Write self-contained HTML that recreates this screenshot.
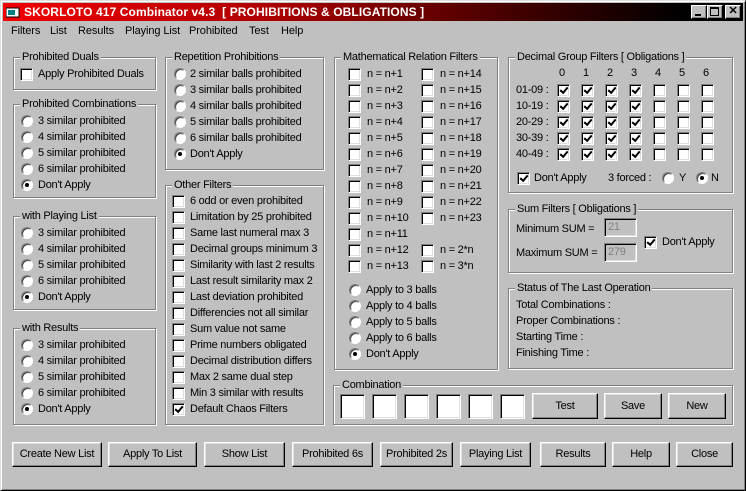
<!DOCTYPE html>
<html><head><meta charset="utf-8"><style>
*{box-sizing:border-box}
body{margin:0;width:746px;height:491px;overflow:hidden;background:#c0c0c0;font-family:"Liberation Sans",sans-serif;font-size:11px;letter-spacing:-0.25px;color:#000;position:relative}
.win{position:absolute;left:0;top:0;width:746px;height:491px;border:1px solid;border-color:#dfdfdf #000 #000 #dfdfdf;box-shadow:inset 1px 1px #fff,inset -1px -1px #808080}
.title{position:absolute;left:3px;top:3px;width:740px;height:18px;background:linear-gradient(to right,#f00000 0%,#b00000 35%,#400000 70%,#000 92%);color:#fff;font-weight:bold;font-size:12px;letter-spacing:0.1px;line-height:18px;padding-left:21px;white-space:pre}
.tb{position:absolute;top:2px;width:16px;height:14px;background:#c0c0c0;border:1px solid;border-color:#fff #000 #000 #fff;box-shadow:inset -1px -1px #808080}
.menu{position:absolute;top:24px;height:15px;line-height:15px;font-size:11px;letter-spacing:-0.1px}
.a{position:absolute;white-space:nowrap;line-height:14px;height:14px}
.g{position:absolute;border:1px solid #808080;box-shadow:inset 1px 1px #fff,1px 1px #fff}
.gl{position:absolute;top:-8px;left:6px;background:#c0c0c0;padding:0 2px;line-height:14px;white-space:nowrap}
.cb{position:absolute;width:13px;height:13px;background:#fff;border:1px solid;border-color:#808080 #fff #fff #808080;box-shadow:inset 1px 1px #000,inset -1px -1px #dfdfdf}
.ck::after{content:"";position:absolute;left:2px;top:1px;width:6px;height:3px;border-left:2px solid #000;border-bottom:2px solid #000;transform:rotate(-50deg);transform-origin:center;margin-top:1px}
.rb{position:absolute;width:12px;height:12px;border-radius:50%;background:#fff;border:1px solid;border-color:#808080 #fff #fff #808080;box-shadow:inset 1px 1px #404040}
.on::after{content:"";position:absolute;left:3px;top:3px;width:4px;height:4px;border-radius:50%;background:#000}
.btn{position:absolute;background:#c0c0c0;border:1px solid;border-color:#fff #000 #000 #fff;box-shadow:inset -1px -1px #808080,inset 1px 1px #dfdfdf;text-align:center;white-space:nowrap;font-size:11px}
.inp{position:absolute;background:#fff;border:1px solid;border-color:#808080 #fff #fff #808080;box-shadow:inset 1px 1px #000,inset -1px -1px #dfdfdf}
.gray{color:#808080;padding-left:3px;line-height:16px;background:#c0c0c0}
</style></head><body>
<div class="win"></div>
<div class="title">SKORLOTO 417 Combinator v4.3  [ PROHIBITIONS &amp; OBLIGATIONS ]</div>
<svg style="position:absolute;left:6px;top:6px" width="14" height="12"><rect x="0" y="2" width="13" height="9" fill="#fff" stroke="#000"/><rect x="2" y="4" width="7" height="5" fill="#008080"/></svg>
<div class="tb" style="left:691px;top:5px"><div style="position:absolute;left:3px;top:8px;width:6px;height:2px;background:#000"></div></div>
<div class="tb" style="left:707px;top:5px"><div style="position:absolute;left:2px;top:1px;width:9px;height:9px;border:1px solid #000;border-top-width:2px"></div></div>
<div class="tb" style="left:725px;top:5px;font-size:11px;line-height:11px;text-align:center;font-weight:bold">✕</div>
<div class="menu" style="left:11px">Filters</div>
<div class="menu" style="left:50px">List</div>
<div class="menu" style="left:78px">Results</div>
<div class="menu" style="left:125px">Playing List</div>
<div class="menu" style="left:189px">Prohibited</div>
<div class="menu" style="left:249px">Test</div>
<div class="menu" style="left:281px">Help</div>

<div class="g" style="left:13px;top:57px;width:143px;height:33px"><div class="gl">Prohibited Duals</div></div>
<div class="cb" style="left:20px;top:68px"></div><div class="a" style="left:38px;top:67px">Apply Prohibited Duals</div>

<div class="g" style="left:13px;top:104px;width:143px;height:94px"><div class="gl">Prohibited Combinations</div></div>
<div class="rb" style="left:21px;top:115px"></div><div class="a" style="left:38px;top:114px">3 similar prohibited</div>
<div class="rb" style="left:21px;top:131px"></div><div class="a" style="left:38px;top:130px">4 similar prohibited</div>
<div class="rb" style="left:21px;top:147px"></div><div class="a" style="left:38px;top:146px">5 similar prohibited</div>
<div class="rb" style="left:21px;top:163px"></div><div class="a" style="left:38px;top:162px">6 similar prohibited</div>
<div class="rb on" style="left:21px;top:179px"></div><div class="a" style="left:38px;top:178px">Don't Apply</div>

<div class="g" style="left:13px;top:216px;width:143px;height:94px"><div class="gl">with Playing List</div></div>
<div class="rb" style="left:21px;top:227px"></div><div class="a" style="left:38px;top:226px">3 similar prohibited</div>
<div class="rb" style="left:21px;top:243px"></div><div class="a" style="left:38px;top:242px">4 similar prohibited</div>
<div class="rb" style="left:21px;top:259px"></div><div class="a" style="left:38px;top:258px">5 similar prohibited</div>
<div class="rb" style="left:21px;top:275px"></div><div class="a" style="left:38px;top:274px">6 similar prohibited</div>
<div class="rb on" style="left:21px;top:291px"></div><div class="a" style="left:38px;top:290px">Don't Apply</div>

<div class="g" style="left:13px;top:328px;width:143px;height:97px"><div class="gl">with Results</div></div>
<div class="rb" style="left:21px;top:339px"></div><div class="a" style="left:38px;top:338px">3 similar prohibited</div>
<div class="rb" style="left:21px;top:355px"></div><div class="a" style="left:38px;top:354px">4 similar prohibited</div>
<div class="rb" style="left:21px;top:371px"></div><div class="a" style="left:38px;top:370px">5 similar prohibited</div>
<div class="rb" style="left:21px;top:387px"></div><div class="a" style="left:38px;top:386px">6 similar prohibited</div>
<div class="rb on" style="left:21px;top:403px"></div><div class="a" style="left:38px;top:402px">Don't Apply</div>

<div class="g" style="left:165px;top:57px;width:159px;height:113px"><div class="gl">Repetition Prohibitions</div></div>
<div class="rb" style="left:174px;top:68px"></div><div class="a" style="left:190px;top:67px">2 similar balls prohibited</div>
<div class="rb" style="left:174px;top:84px"></div><div class="a" style="left:190px;top:83px">3 similar balls prohibited</div>
<div class="rb" style="left:174px;top:100px"></div><div class="a" style="left:190px;top:99px">4 similar balls prohibited</div>
<div class="rb" style="left:174px;top:116px"></div><div class="a" style="left:190px;top:115px">5 similar balls prohibited</div>
<div class="rb" style="left:174px;top:132px"></div><div class="a" style="left:190px;top:131px">6 similar balls prohibited</div>
<div class="rb on" style="left:174px;top:148px"></div><div class="a" style="left:190px;top:147px">Don't Apply</div>

<div class="g" style="left:165px;top:185px;width:159px;height:240px"><div class="gl">Other Filters</div></div>
<div class="cb" style="left:172px;top:195px"></div><div class="a" style="left:190px;top:194px">6 odd or even prohibited</div>
<div class="cb" style="left:172px;top:211px"></div><div class="a" style="left:190px;top:210px">Limitation by 25 prohibited</div>
<div class="cb" style="left:172px;top:227px"></div><div class="a" style="left:190px;top:226px">Same last numeral max 3</div>
<div class="cb" style="left:172px;top:243px"></div><div class="a" style="left:190px;top:242px">Decimal groups minimum 3</div>
<div class="cb" style="left:172px;top:259px"></div><div class="a" style="left:190px;top:258px">Similarity with last 2 results</div>
<div class="cb" style="left:172px;top:275px"></div><div class="a" style="left:190px;top:274px">Last result similarity max 2</div>
<div class="cb" style="left:172px;top:291px"></div><div class="a" style="left:190px;top:290px">Last deviation prohibited</div>
<div class="cb" style="left:172px;top:307px"></div><div class="a" style="left:190px;top:306px">Differencies not all similar</div>
<div class="cb" style="left:172px;top:323px"></div><div class="a" style="left:190px;top:322px">Sum value not same</div>
<div class="cb" style="left:172px;top:339px"></div><div class="a" style="left:190px;top:338px">Prime numbers obligated</div>
<div class="cb" style="left:172px;top:355px"></div><div class="a" style="left:190px;top:354px">Decimal distribution differs</div>
<div class="cb" style="left:172px;top:371px"></div><div class="a" style="left:190px;top:370px">Max 2 same dual step</div>
<div class="cb" style="left:172px;top:387px"></div><div class="a" style="left:190px;top:386px">Min 3 similar with results</div>
<div class="cb ck" style="left:172px;top:403px"></div><div class="a" style="left:190px;top:402px">Default Chaos Filters</div>

<div class="g" style="left:334px;top:57px;width:164px;height:313px"><div class="gl">Mathematical Relation Filters</div></div>
<div class="cb" style="left:348px;top:68px"></div><div class="a" style="left:367px;top:67px">n = n+1</div>
<div class="cb" style="left:348px;top:84px"></div><div class="a" style="left:367px;top:83px">n = n+2</div>
<div class="cb" style="left:348px;top:100px"></div><div class="a" style="left:367px;top:99px">n = n+3</div>
<div class="cb" style="left:348px;top:116px"></div><div class="a" style="left:367px;top:115px">n = n+4</div>
<div class="cb" style="left:348px;top:132px"></div><div class="a" style="left:367px;top:131px">n = n+5</div>
<div class="cb" style="left:348px;top:148px"></div><div class="a" style="left:367px;top:147px">n = n+6</div>
<div class="cb" style="left:348px;top:164px"></div><div class="a" style="left:367px;top:163px">n = n+7</div>
<div class="cb" style="left:348px;top:180px"></div><div class="a" style="left:367px;top:179px">n = n+8</div>
<div class="cb" style="left:348px;top:196px"></div><div class="a" style="left:367px;top:195px">n = n+9</div>
<div class="cb" style="left:348px;top:212px"></div><div class="a" style="left:367px;top:211px">n = n+10</div>
<div class="cb" style="left:348px;top:228px"></div><div class="a" style="left:367px;top:227px">n = n+11</div>
<div class="cb" style="left:348px;top:244px"></div><div class="a" style="left:367px;top:243px">n = n+12</div>
<div class="cb" style="left:348px;top:260px"></div><div class="a" style="left:367px;top:259px">n = n+13</div>
<div class="cb" style="left:421px;top:68px"></div><div class="a" style="left:440px;top:67px">n = n+14</div>
<div class="cb" style="left:421px;top:84px"></div><div class="a" style="left:440px;top:83px">n = n+15</div>
<div class="cb" style="left:421px;top:100px"></div><div class="a" style="left:440px;top:99px">n = n+16</div>
<div class="cb" style="left:421px;top:116px"></div><div class="a" style="left:440px;top:115px">n = n+17</div>
<div class="cb" style="left:421px;top:132px"></div><div class="a" style="left:440px;top:131px">n = n+18</div>
<div class="cb" style="left:421px;top:148px"></div><div class="a" style="left:440px;top:147px">n = n+19</div>
<div class="cb" style="left:421px;top:164px"></div><div class="a" style="left:440px;top:163px">n = n+20</div>
<div class="cb" style="left:421px;top:180px"></div><div class="a" style="left:440px;top:179px">n = n+21</div>
<div class="cb" style="left:421px;top:196px"></div><div class="a" style="left:440px;top:195px">n = n+22</div>
<div class="cb" style="left:421px;top:212px"></div><div class="a" style="left:440px;top:211px">n = n+23</div>
<div class="cb" style="left:421px;top:244px"></div><div class="a" style="left:440px;top:243px">n = 2*n</div>
<div class="cb" style="left:421px;top:260px"></div><div class="a" style="left:440px;top:259px">n = 3*n</div>
<div class="rb" style="left:349px;top:284px"></div><div class="a" style="left:366px;top:283px">Apply to 3 balls</div>
<div class="rb" style="left:349px;top:300px"></div><div class="a" style="left:366px;top:299px">Apply to 4 balls</div>
<div class="rb" style="left:349px;top:316px"></div><div class="a" style="left:366px;top:315px">Apply to 5 balls</div>
<div class="rb" style="left:349px;top:332px"></div><div class="a" style="left:366px;top:331px">Apply to 6 balls</div>
<div class="rb on" style="left:349px;top:348px"></div><div class="a" style="left:366px;top:347px">Don't Apply</div>

<div class="g" style="left:508px;top:57px;width:225px;height:136px"><div class="gl">Decimal Group Filters [ Obligations ]</div></div>
<div class="a" style="left:559px;top:66px">0</div><div class="a" style="left:583px;top:66px">1</div><div class="a" style="left:607px;top:66px">2</div><div class="a" style="left:631px;top:66px">3</div><div class="a" style="left:655px;top:66px">4</div><div class="a" style="left:679px;top:66px">5</div><div class="a" style="left:703px;top:66px">6</div>
<div class="a" style="left:516px;top:83px">01-09 :</div>
<div class="a" style="left:516px;top:99px">10-19 :</div>
<div class="a" style="left:516px;top:115px">20-29 :</div>
<div class="a" style="left:516px;top:131px">30-39 :</div>
<div class="a" style="left:516px;top:147px">40-49 :</div>
<div class="cb ck" style="left:557px;top:84px"></div><div class="cb ck" style="left:581px;top:84px"></div><div class="cb ck" style="left:605px;top:84px"></div><div class="cb ck" style="left:629px;top:84px"></div><div class="cb" style="left:653px;top:84px"></div><div class="cb" style="left:677px;top:84px"></div><div class="cb" style="left:701px;top:84px"></div>
<div class="cb ck" style="left:557px;top:100px"></div><div class="cb ck" style="left:581px;top:100px"></div><div class="cb ck" style="left:605px;top:100px"></div><div class="cb ck" style="left:629px;top:100px"></div><div class="cb" style="left:653px;top:100px"></div><div class="cb" style="left:677px;top:100px"></div><div class="cb" style="left:701px;top:100px"></div>
<div class="cb ck" style="left:557px;top:116px"></div><div class="cb ck" style="left:581px;top:116px"></div><div class="cb ck" style="left:605px;top:116px"></div><div class="cb ck" style="left:629px;top:116px"></div><div class="cb" style="left:653px;top:116px"></div><div class="cb" style="left:677px;top:116px"></div><div class="cb" style="left:701px;top:116px"></div>
<div class="cb ck" style="left:557px;top:132px"></div><div class="cb ck" style="left:581px;top:132px"></div><div class="cb ck" style="left:605px;top:132px"></div><div class="cb ck" style="left:629px;top:132px"></div><div class="cb" style="left:653px;top:132px"></div><div class="cb" style="left:677px;top:132px"></div><div class="cb" style="left:701px;top:132px"></div>
<div class="cb ck" style="left:557px;top:148px"></div><div class="cb ck" style="left:581px;top:148px"></div><div class="cb ck" style="left:605px;top:148px"></div><div class="cb ck" style="left:629px;top:148px"></div><div class="cb" style="left:653px;top:148px"></div><div class="cb" style="left:677px;top:148px"></div><div class="cb" style="left:701px;top:148px"></div>
<div class="cb ck" style="left:517px;top:172px"></div><div class="a" style="left:534px;top:171px">Don't Apply</div>
<div class="a" style="left:608px;top:171px">3 forced :</div>
<div class="rb" style="left:662px;top:172px"></div><div class="a" style="left:679px;top:171px">Y</div>
<div class="rb on" style="left:696px;top:172px"></div><div class="a" style="left:711px;top:171px">N</div>

<div class="g" style="left:508px;top:209px;width:225px;height:64px"><div class="gl">Sum Filters [ Obligations ]</div></div>
<div class="a" style="left:516px;top:222px">Minimum SUM =</div>
<div class="a" style="left:516px;top:246px">Maximum SUM =</div>
<div class="inp gray" style="left:604px;top:218px;width:33px;height:19px">21</div>
<div class="inp gray" style="left:604px;top:243px;width:33px;height:19px">279</div>
<div class="cb ck" style="left:644px;top:236px"></div><div class="a" style="left:662px;top:235px">Don't Apply</div>

<div class="g" style="left:508px;top:288px;width:225px;height:81px"><div class="gl">Status of The Last Operation</div></div>
<div class="a" style="left:516px;top:298px">Total Combinations :</div>
<div class="a" style="left:516px;top:314px">Proper Combinations :</div>
<div class="a" style="left:516px;top:330px">Starting Time :</div>
<div class="a" style="left:516px;top:346px">Finishing Time :</div>

<div class="g" style="left:333px;top:385px;width:400px;height:40px"><div class="gl">Combination</div></div>
<div class="inp" style="left:340px;top:394px;width:25px;height:25px"></div>
<div class="inp" style="left:372px;top:394px;width:25px;height:25px"></div>
<div class="inp" style="left:404px;top:394px;width:25px;height:25px"></div>
<div class="inp" style="left:436px;top:394px;width:25px;height:25px"></div>
<div class="inp" style="left:468px;top:394px;width:25px;height:25px"></div>
<div class="inp" style="left:500px;top:394px;width:25px;height:25px"></div>
<div class="btn" style="left:532px;top:393px;width:66px;height:26px;line-height:24px">Test</div>
<div class="btn" style="left:604px;top:393px;width:58px;height:26px;line-height:24px">Save</div>
<div class="btn" style="left:668px;top:393px;width:58px;height:26px;line-height:24px">New</div>

<div class="btn" style="left:12px;top:442px;width:90px;height:25px;line-height:23px">Create New List</div>
<div class="btn" style="left:108px;top:442px;width:89px;height:25px;line-height:23px">Apply To List</div>
<div class="btn" style="left:204px;top:442px;width:81px;height:25px;line-height:23px">Show List</div>
<div class="btn" style="left:292px;top:442px;width:81px;height:25px;line-height:23px">Prohibited 6s</div>
<div class="btn" style="left:380px;top:442px;width:73px;height:25px;line-height:23px">Prohibited 2s</div>
<div class="btn" style="left:460px;top:442px;width:71px;height:25px;line-height:23px">Playing List</div>
<div class="btn" style="left:540px;top:442px;width:66px;height:25px;line-height:23px">Results</div>
<div class="btn" style="left:612px;top:442px;width:58px;height:25px;line-height:23px">Help</div>
<div class="btn" style="left:676px;top:442px;width:57px;height:25px;line-height:23px">Close</div>
</body></html>
